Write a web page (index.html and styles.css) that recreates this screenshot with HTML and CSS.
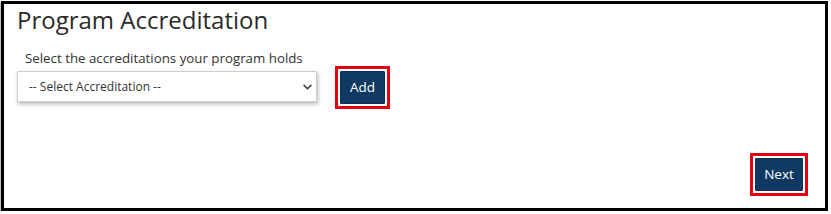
FILE: index.html
```html
<!DOCTYPE html>
<html lang="en">
<head>
<meta charset="utf-8">
<title>Program Accreditation</title>
<link rel="stylesheet" href="styles.css">
</head>
<body>
<div class="frame">
  <h1 class="title">Program Accreditation</h1>
  <div class="field">
    <label class="field-label" for="acc">Select the accreditations your program holds</label>
    <div class="field-row">
      <div class="select-wrap">
        <select id="acc" class="select">
          <option>-- Select Accreditation --</option>
        </select>
        <svg class="chevron" width="9" height="6" viewBox="0 0 9 6" aria-hidden="true"><path d="M1 1.2l3.5 3.5 3.5-3.5" fill="none" stroke="#333" stroke-width="1.5" stroke-linecap="round" stroke-linejoin="round"/></svg>
      </div>
      <div class="highlight highlight-add"><button class="btn" type="button">Add</button></div>
    </div>
  </div>
  <div class="spacer"></div>
  <div class="footer">
    <div class="highlight"><button class="btn btn-next" type="button">Next</button></div>
  </div>
</div>
</body>
</html>
```
FILE: styles.css
```css
html, body {
  margin: 0;
  padding: 0;
  background: #fff;
}
body {
  font-family: "Open Sans", "Noto Sans", sans-serif;
  color: #333;
}
.frame {
  box-sizing: border-box;
  margin: 1px 0 0 1px;
  width: 827px;
  height: 210px;
  border: 3px solid #000;
  box-shadow: -1px 1px 1px rgba(0,0,0,0.25);
  padding: 0 17px 12px 13px;
  display: flex;
  flex-direction: column;
}
.title {
  margin: 0;
  font-size: 24px;
  font-weight: 400;
  line-height: 31px;
  color: #2a2a2a;
}
.field {
  margin-top: 14px;
}
.field-label {
  display: block;
  padding-left: 8px;
  font-size: 13.3px;
  line-height: 19px;
  color: #333;
}
.field-row {
  display: flex;
  align-items: flex-start;
  margin-top: 3px;
}
.select-wrap {
  position: relative;
}
.select {
  -webkit-appearance: none;
  appearance: none;
  box-sizing: border-box;
  width: 300px;
  height: 31px;
  margin: 0;
  padding: 0 24px 0 11px;
  border: 1px solid #cfcfcf;
  border-radius: 1px;
  background: #fff;
  box-shadow: 1px 2px 4px rgba(0,0,0,0.3);
  font-family: "Open Sans", "Noto Sans", sans-serif;
  font-size: 12px;
  color: #333;
}
.chevron {
  position: absolute;
  right: 5px;
  top: 13px;
}
.highlight {
  border: 3px solid #e3000f;
  padding: 2px;
  background: #fff;
}
.highlight-add {
  margin-left: 18px;
  margin-top: -5px;
}
.btn {
  display: block;
  box-sizing: border-box;
  height: 33px;
  padding: 0 9px;
  margin: 0;
  border: 1px solid #0b2f52;
  border-radius: 1px;
  background: #103a63;
  color: #fff;
  font-family: "Open Sans", "Noto Sans", sans-serif;
  font-size: 13.5px;
  font-weight: 500;
  line-height: 31px;
}
.btn-next {
  width: 48px;
  padding: 0;
}
.spacer {
  flex: 1;
}
.footer {
  display: flex;
  justify-content: flex-end;
}
```
